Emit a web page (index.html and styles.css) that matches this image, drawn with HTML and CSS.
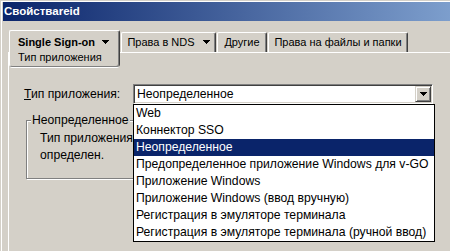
FILE: index.html
```html
<!DOCTYPE html>
<html lang="ru">
<head>
<meta charset="utf-8">
<title>Свойстваreid</title>
<link rel="stylesheet" href="styles.css">
</head>
<body>
<div class="window">
  <div class="titlebar">Свойстваreid</div>
  <div class="content">
    <div class="tabs">
      <div class="tab selected">
        <div class="tab-head">
          <span class="tab-label bold">Single Sign-on</span>
          <svg class="tri" width="7" height="4" viewBox="0 0 7 4" shape-rendering="crispEdges"><path d="M0 0h7v1h-1v1h-1v1h-1v1h-1v-1h-1v-1h-1v-1h-1z"/></svg>
        </div>
        <div class="tab-sub">Тип приложения</div>
      </div>
      <div class="tab w-nds">
        <span class="tab-label">Права в NDS</span>
        <svg class="tri" width="7" height="4" viewBox="0 0 7 4" shape-rendering="crispEdges"><path d="M0 0h7v1h-1v1h-1v1h-1v1h-1v-1h-1v-1h-1v-1h-1z"/></svg>
      </div>
      <div class="tab w-other"><span class="tab-label">Другие</span></div>
      <div class="tab w-files"><span class="tab-label">Права на файлы и папки</span></div>
    </div>
    <div class="panel">
      <div class="field-row">
        <label class="field-label"><u>Т</u>ип приложения:</label>
        <div class="combo">
          <span class="combo-text">Неопределенное</span>
          <span class="combo-btn">
            <svg width="7" height="4" viewBox="0 0 7 4" shape-rendering="crispEdges"><path d="M0 0h7v1h-1v1h-1v1h-1v1h-1v-1h-1v-1h-1v-1h-1z"/></svg>
          </span>
          <ul class="list">
            <li>Web</li>
            <li>Коннектор SSO</li>
            <li class="sel">Неопределенное</li>
            <li>Предопределенное приложение Windows для v-GO</li>
            <li>Приложение Windows</li>
            <li>Приложение Windows (ввод вручную)</li>
            <li>Регистрация в эмуляторе терминала</li>
            <li>Регистрация в эмуляторе терминала (ручной ввод)</li>
          </ul>
        </div>
      </div>
      <fieldset class="group">
        <legend class="group-title">Неопределенное</legend>
        <div class="group-text">Тип приложения не<br>определен.</div>
      </fieldset>
    </div>
  </div>
</div>
</body>
</html>
```

FILE: styles.css
```css
* { box-sizing: border-box; }
html, body { margin: 0; padding: 0; }
body {
  width: 450px;
  height: 251px;
  overflow: hidden;
  background: #d4d0c8;
  font-family: "Liberation Sans", Arial, sans-serif;
  font-size: 12.2px;
  color: #000;
}
.window {
  height: 251px;
  border-top: 1px solid #d4d0c8;
  border-left: 1px solid #d4d0c8;
  box-shadow: inset 1px 1px 0 #fff;
  padding: 1px 0 0 2px;
}
.titlebar {
  height: 19px;
  background: linear-gradient(to right, #0a246a 0, #a6caf0 608px);
  color: #fff;
  font: bold 11.5px/19px "Liberation Sans", sans-serif;
  padding-left: 1px;
  white-space: nowrap;
}
.content {
  padding: 9px 0 0 5px;
}
.tabs {
  display: flex;
  align-items: flex-start;
  height: 22px;
  font-size: 11px;
}
.tab {
  margin: 2px 0 0 1px;
  height: 20px;
  border: 1px solid #fff;
  border-bottom: 0;
  border-right-color: #404040;
  border-radius: 2px 2px 0 0;
  box-shadow: inset -1px 0 0 #808080;
  display: flex;
  justify-content: center;
  align-items: flex-start;
  gap: 8px;
  padding-top: 2px;
  line-height: 14px;
  white-space: nowrap;
}
.tab .tri { margin-top: 5px; }
.w-nds { width: 95px; }
.w-other { width: 50px; }
.w-files { width: 140px; }
.tab.selected {
  position: relative;
  z-index: 1;
  margin-top: 0;
  width: 111px;
  height: 37px;
  background: #d4d0c8;
  border-bottom: 1px solid #808080;
  border-radius: 2px 2px 3px 3px;
  box-shadow: inset -1px 0 0 #808080, 0 2px 0 -1px #fff;
  flex-direction: column;
  justify-content: flex-start;
  gap: 1px;
  padding: 4px 0 0 8px;
}
.tab-head {
  display: flex;
  align-items: flex-start;
  gap: 7px;
}
.bold { font-weight: bold; }
.tab-sub { line-height: 14px; }
.panel {
  border-top: 1px solid #fff;
  border-left: 1px solid #fff;
  padding: 31px 0 0 15px;
  height: 210px;
}
.field-row {
  display: flex;
  align-items: center;
}
.field-label {
  width: 109px;
  line-height: 16px;
}
.combo {
  position: relative;
  width: 300px;
  height: 20px;
  display: flex;
  padding: 1px;
  background: #fff;
  border: 1px solid;
  border-color: #808080 #fff #fff #808080;
  box-shadow: inset 1px 1px 0 #404040, inset -1px -1px 0 #d4d0c8;
}
.combo-text {
  flex: 1;
  padding-left: 2px;
  line-height: 16px;
  white-space: nowrap;
}
.combo-btn {
  width: 16px;
  height: 16px;
  display: flex;
  align-items: center;
  justify-content: center;
  background: #d4d0c8;
  border: 1px solid;
  border-color: #d4d0c8 #404040 #404040 #d4d0c8;
  box-shadow: inset 1px 1px 0 #fff, inset -1px -1px 0 #808080;
}
.list {
  position: absolute;
  left: -1px;
  top: calc(100% + 1px);
  z-index: 2;
  width: 302px;
  margin: 0;
  padding: 0;
  list-style: none;
  background: #fff;
  border: 1px solid #000;
}
.list li {
  height: 17px;
  line-height: 17px;
  padding-left: 2px;
  white-space: nowrap;
}
.list li.sel {
  background: #0a246a;
  color: #fff;
}
.group {
  margin: 10px 0 0 2px;
  width: 400px;
  min-width: 0;
  padding: 0 0 14px 4px;
  border: 1px solid #808080;
  box-shadow: 1px 1px 0 #fff, inset 1px 1px 0 #fff;
}
.group-title {
  padding: 0 1px;
  line-height: 13px;
  background: #d4d0c8;
}
.group-text {
  margin-top: 3px;
  padding-left: 9px;
  line-height: 17px;
  white-space: nowrap;
}
```
